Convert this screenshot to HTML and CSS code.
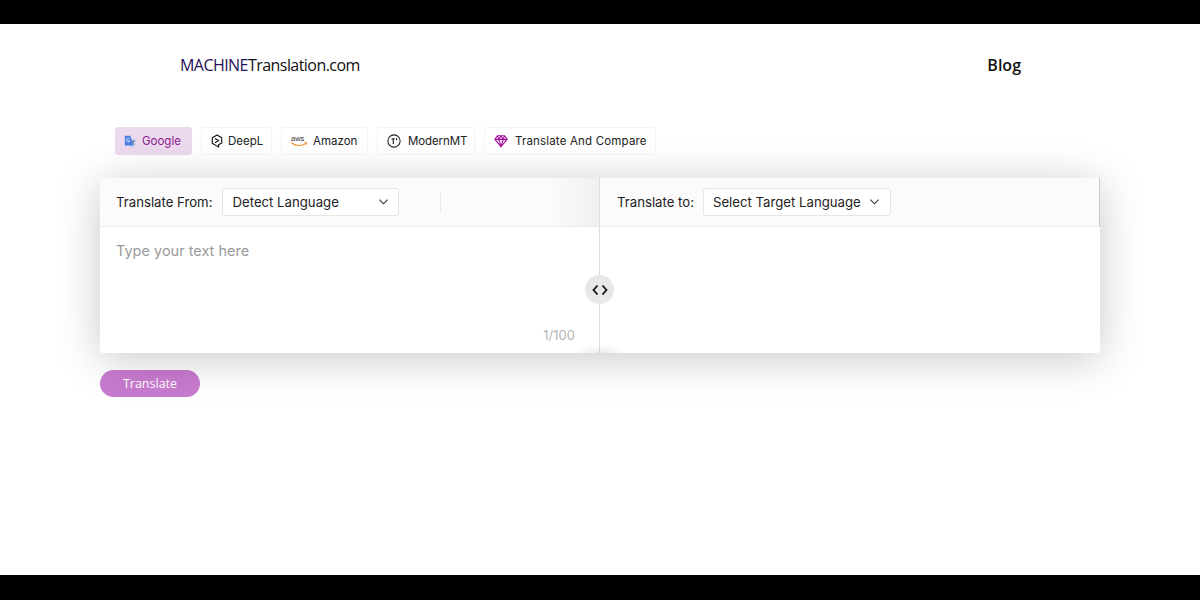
FILE: index.html
```html
<!DOCTYPE html>
<html lang="en">
<head>
<meta charset="utf-8">
<title>MachineTranslation.com</title>
<link rel="stylesheet" href="styles.css">
</head>
<body>
<div class="bar bar-top"></div>
<main class="page">
  <header class="site-header">
    <a class="logo"><span class="logo-strong">MACHINE</span>Translation.com</a>
    <a class="blog">Blog</a>
  </header>
  <nav class="tabs">
    <button class="tab tab-active tab-google">
      <svg class="icon-google" viewBox="0 0 16 16"><path d="M7 5h7.500l-2 10H8z" fill="#c3d3ef"/><path d="M1 1h7l3.500 12H1z" fill="#4a80e4"/><path d="M9 7.500h5M11.500 6.500v1c-.2 2-1.200 3.300-2.500 4.300M10.300 9.500c.8 1 1.800 1.800 3.200 2.300" stroke="#56698f" stroke-width=".9" fill="none"/><path d="M7 5a2.200 2.200 0 1 0 .3 2.200H5.300" stroke="#fff" stroke-width=".9" fill="none"/></svg>
      Google
    </button>
    <button class="tab tab-deepl">
      <svg class="icon-deepl" viewBox="0 0 14 16" fill="none" stroke="#111" stroke-width="1.300"><path d="M7 1l5.500 3.100v6.300L8.800 12.500v2.600L7 14 1.500 10.700V4.100z" stroke-linejoin="round"/><path d="M5 5.300L8.800 7.500 5 9.700" stroke-linecap="round"/></svg>
      DeepL
    </button>
    <button class="tab tab-amazon">
      <svg class="icon-aws" viewBox="0 0 16 14" fill="none"><text x="0" y="7" class="aws-text">aws</text><path d="M.8 9c4 3.200 10 3.200 14 .6" stroke="#f0962a" stroke-width="1.100" stroke-linecap="round"/><path d="M13.200 8.800l2.500-.3-.6 2.400" stroke="#f0962a" stroke-width=".9"/></svg>
      Amazon
    </button>
    <button class="tab tab-modern">
      <svg class="icon" viewBox="0 0 16 16" fill="none" stroke="#222" stroke-width="1.200"><circle cx="8" cy="8" r="7"/><path d="M5.200 5.500h3.600M7.200 5.500v5.800M11 4.500v2.600" stroke-width="1.300"/></svg>
      ModernMT
    </button>
    <button class="tab tab-compare">
      <svg class="icon" viewBox="0 0 16 16" fill="none" stroke="#a2129c" stroke-width="1.300" stroke-linejoin="round"><path d="M4 2h8l3 4.200L8 14.500 1 6.200z"/><path d="M1 6.200h14M5.500 6.200L8 14.500l2.500-8.300M4 2l1.500 4.200L8 2l2.500 4.200L12 2"/></svg>
      Translate And Compare
    </button>
  </nav>
  <section class="panel">
    <div class="pane pane-left">
      <div class="pane-head pane-head-left">
        <span class="label">Translate From:</span>
        <div class="select select-from">
          <span>Detect Language</span>
          <svg class="chev" viewBox="0 0 12 8"><path d="M1.500 1.500L6 6l4.500-4.500"/></svg>
        </div>
        <span class="tick"></span>
      </div>
      <div class="pane-body">
        <p class="placeholder">Type your text here</p>
        <span class="count">1/100</span>
      </div>
    </div>
    <div class="pane pane-right">
      <div class="pane-head">
        <span class="label">Translate to:</span>
        <div class="select select-to">
          <span>Select Target Language</span>
          <svg class="chev" viewBox="0 0 12 8"><path d="M1.500 1.500L6 6l4.500-4.500"/></svg>
        </div>
      </div>
      <div class="pane-body"></div>
    </div>
    <div class="swap">
      <svg viewBox="0 0 16 12" fill="none" stroke="#111" stroke-width="1.800"><path d="M5.500 1.500L1.500 6l4 4.500M10.500 1.500l4 4.500-4 4.500"/></svg>
    </div>
    <div class="foot-glow"></div>
  </section>
  <button class="translate">Translate</button>
</main>
<div class="bar bar-bottom"></div>
</body>
</html>
```
FILE: styles.css
```css
* { box-sizing: border-box; }
html, body { margin: 0; height: 100%; }
body {
  display: flex;
  flex-direction: column;
  height: 600px;
  overflow: hidden;
  background: #fff;
  font-family: Inter, "Liberation Sans", sans-serif;
  color: #1a1a1a;
}
.bar { background: #000; flex: none; }
.bar-top { height: 24px; }
.bar-bottom { height: 25px; }
.page { flex: 1; padding: 0 100px; }
.site-header {
  display: flex;
  justify-content: space-between;
  align-items: center;
  height: 82px;
  padding: 0 79px 0 80px;
  font-family: "Open Sans", sans-serif;
  font-size: 16px;
  color: #111;
}
.logo { letter-spacing: -.55px; }
.logo-strong { color: #241058; }
.blog { font-weight: 600; font-size: 16px; }
.tabs {
  display: flex;
  gap: 9px;
  margin-top: 21px;
  padding-left: 15px;
  height: 28px;
}
.tab {
  display: flex;
  align-items: center;
  height: 28px;
  padding: 0 0 0 9px;
  border: 1px solid #f4f4f4;
  border-radius: 3px;
  background: #fff;
  font: 400 11.500px Inter, sans-serif;
  color: #222;
  white-space: nowrap;
}
.tab-google { width: 77px; gap: 5px; padding-left: 8px; }
.tab-deepl { width: 71px; gap: 5px; }
.tab-amazon { width: 87px; gap: 6px; }
.tab-modern { width: 98px; gap: 7px; letter-spacing: -.01em; }
.tab-compare { width: 172px; gap: 7px; letter-spacing: .015em; }
.tab-active {
  background: #ecd9ee;
  border-color: #ecd9ee;
  color: #8a1d8c;
}
.icon { width: 14px; height: 14px; flex: none; }
.icon-google { width: 13px; height: 13px; flex: none; }
.icon-deepl { width: 12px; height: 14px; flex: none; }
.icon-aws { width: 16px; height: 14px; flex: none; }
.aws-text { font: 400 7.500px "Liberation Sans", sans-serif; fill: #333; }
.panel {
  position: relative;
  display: flex;
  height: 175px;
  margin-top: 23px;
  border-radius: 2px;
  background: #fff;
  box-shadow: 0 6px 44px rgba(0, 0, 0, .22);
}
.pane { width: 500px; display: flex; flex-direction: column; }
.pane-left { border-right: 1px solid #dedede; }
.pane-head {
  display: flex;
  align-items: center;
  gap: 9px;
  height: 49px;
  padding: 0 16px;
  background: #fbfbfb;
  border-bottom: 1px solid #ececec;
  font-size: 13.200px;
}
.pane-right .pane-head { padding-left: 17px; border-right: 1px solid #c9c9c9; }
.pane-head-left { background: linear-gradient(90deg, #fbfbfb 90%, #f0f0f0 100%); }
.label { color: #222; }
.select {
  display: flex;
  align-items: center;
  justify-content: space-between;
  height: 28px;
  padding: 0 10px 0 9px;
  border: 1px solid #e6e6e6;
  border-radius: 3px;
  background: #fff;
  color: #222;
}
.select-from { width: 177px; margin-left: 1px; padding-right: 9px; }
.select-to { width: 188px; }
.chev { width: 11px; height: 8px; fill: none; stroke: #333; stroke-width: 1.200; }
.tick {
  width: 1px;
  height: 20px;
  margin-left: 32px;
  background: #e8e8e8;
}
.pane-body { position: relative; flex: 1; padding: 14px 16px; }
.placeholder {
  margin: 0;
  font-size: 14.500px;
  line-height: 20px;
  color: #9a9a9a;
}
.count {
  position: absolute;
  right: 24px;
  bottom: 10px;
  font-size: 13px;
  color: #b4b4b4;
}
.swap {
  position: absolute;
  left: 485px;
  top: 97px;
  width: 29px;
  height: 29px;
  display: flex;
  align-items: center;
  justify-content: center;
  border-radius: 50%;
  background: #e8e8e8;
}
.swap svg { width: 16px; height: 12px; }
.foot-glow {
  position: absolute;
  left: 472px;
  bottom: 0;
  width: 56px;
  height: 8px;
  background: radial-gradient(ellipse at 50% 100%, rgba(0, 0, 0, .08), rgba(0, 0, 0, 0) 70%);
}
.translate {
  display: block;
  width: 100px;
  height: 27px;
  margin-top: 17px;
  padding: 0;
  border: 0;
  border-radius: 14px;
  background: #c97bcf;
  color: #fff;
  font: 400 12.500px "Open Sans", sans-serif;
}
```
